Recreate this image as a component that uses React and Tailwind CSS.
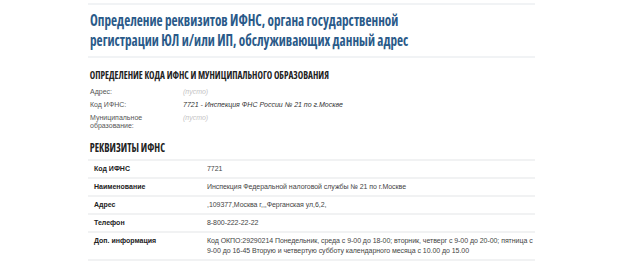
const rows = [
  ['Код ИФНС', '7721'],
  ['Наименование', 'Инспекция Федеральной налоговой службы № 21 по г.Москве'],
  ['Адрес', ',109377,Москва г,,,Ферганская ул,6,2,'],
  ['Телефон', '8-800-222-22-22'],
  [
    'Доп. информация',
    'Код ОКПО:29290214 Понедельник, среда с 9-00 до 18-00; вторник, четверг с 9-00 до 20-00; пятница с 9-00 до 16-45 Вторую и четвертую субботу календарного месяца с 10.00 до 15.00',
  ],
];

const head = "font-['Open_Sans',sans-serif] [font-stretch:condensed] font-bold origin-left whitespace-nowrap";

export default function App() {
  return (
    <div className="min-h-[262px] bg-white font-['Liberation_Sans',Arial,sans-serif]">
      <div className="ml-[88px] w-[447px] pt-[3px]">
        <div className="border-y-2 border-[#f1f3f5] pl-[2px] pt-[5px] pb-[6px]">
          <h1 className={`${head} scale-x-[0.8] text-[16.5px] leading-[20px] text-[#2a5a89]`}>
            Определение реквизитов ИФНС, органа государственной
            <br />
            регистрации ЮЛ и/или ИП, обслуживающих данный адрес
          </h1>
        </div>

        <h2 className={`${head} scale-x-[0.88] mt-[11px] pl-[2px] text-[10.5px] leading-[12px] text-[#222]`}>
          ОПРЕДЕЛЕНИЕ КОДА ИФНС И МУНИЦИПАЛЬНОГО ОБРАЗОВАНИЯ
        </h2>

        <div className="mt-[7px] pl-[2px] text-[7px] leading-[8px] text-[#555]">
          <div className="flex h-[13px]">
            <span className="w-[93px]">Адрес:</span>
            <span className="italic text-[#c4c4c4]">(пусто)</span>
          </div>
          <div className="flex h-[13px]">
            <span className="w-[93px]">Код ИФНС:</span>
            <span className="italic text-[#333]">7721 - Инспекция ФНС России № 21 по г.Москве</span>
          </div>
          <div className="flex">
            <span className="w-[93px]">
              Муниципальное
              <br />
              образование:
            </span>
            <span className="italic text-[#c4c4c4]">(пусто)</span>
          </div>
        </div>

        <h2 className={`${head} scale-x-[0.88] mt-[11px] pl-[2px] text-[11.5px] leading-[13px] text-[#222]`}>
          РЕКВИЗИТЫ ИФНС
        </h2>

        <table className="mt-[5px] w-full border-collapse text-[7px] leading-[10px] text-[#444]">
          <tbody>
            {rows.map(([k, v]) => (
              <tr key={k} className="border-t-2 border-b-2 border-[#f1f2f3]">
                <td className="w-[119px] py-[3px] pl-[6px] align-top font-bold text-[#222]">{k}</td>
                <td className="py-[3px] pr-0 align-top tracking-[-0.05px]">{v}</td>
              </tr>
            ))}
          </tbody>
        </table>
      </div>
    </div>
  );
}
